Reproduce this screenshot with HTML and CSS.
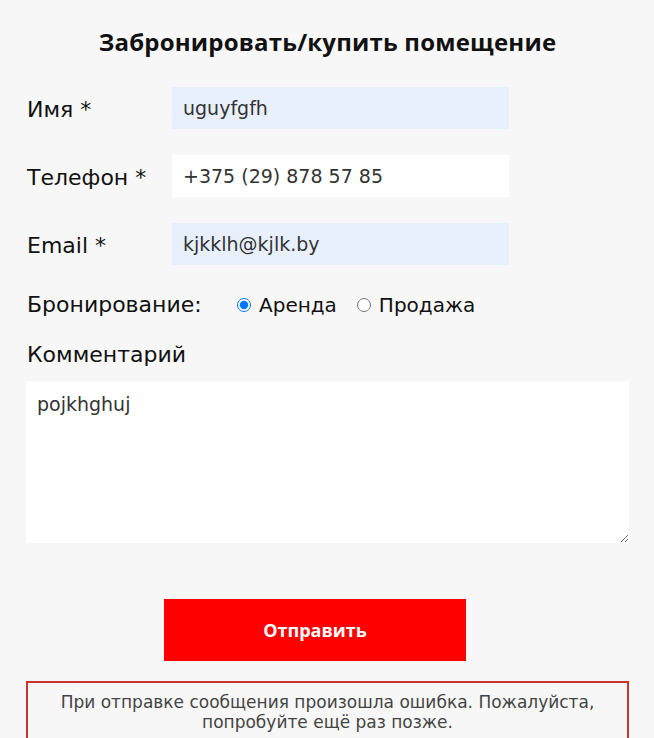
FILE: index.html
```html
<!DOCTYPE html>
<html lang="ru">
<head>
    <meta charset="UTF-8">
    <meta name="viewport" content="width=device-width, initial-scale=1.0">
    <title>Забронировать/купить помещение</title>
    <link rel="stylesheet" href="styles.css">
</head>
<body>
    <div class="form-wrap">
        <!-- Title -->
        <div class="form-title">Забронировать/купить помещение</div>

        <form class="booking-form" onsubmit="return false;">
            <div class="form-row">
                <label class="form-label" for="name">Имя *</label>
                <input class="form-input autofilled" type="text" id="name" value="uguyfgfh">
            </div>

            <div class="form-row">
                <label class="form-label" for="phone">Телефон *</label>
                <input class="form-input" type="text" id="phone" value="+375 (29) 878 57 85">
            </div>

            <div class="form-row">
                <label class="form-label" for="email">Email *</label>
                <input class="form-input autofilled" type="text" id="email" value="kjkklh@kjlk.by">
            </div>

            <!-- Booking type -->
            <div class="radio-row">
                <span class="form-label">Бронирование:</span>
                <label class="radio-option"><input type="radio" name="type" checked> Аренда</label>
                <label class="radio-option"><input type="radio" name="type"> Продажа</label>
            </div>

            <div class="comment-label">Комментарий</div>
            <textarea class="comment-input">pojkhghuj</textarea>

            <div class="submit-row">
                <button class="submit-btn" type="submit">Отправить</button>
            </div>

            <!-- Error message -->
            <div class="form-error">При отправке сообщения произошла ошибка. Пожалуйста, попробуйте ещё раз позже.</div>
        </form>
    </div>
</body>
</html>
```

FILE: styles.css
```css
/* General */
body {
    margin: 0;
    font-family: "DejaVu Sans", "Open Sans", sans-serif;
    background: #f7f7f7;
    color: #111;
}

.form-wrap {
    padding: 27px 25px 0 26px;
}

/* Title */
.form-title {
    text-align: center;
    font-family: "Open Sans", sans-serif;
    font-size: 24px;
    font-weight: bold;
    letter-spacing: 0.2px;
    line-height: 30px;
    margin-bottom: 30px;
}

/* Rows */
.form-row {
    display: flex;
    align-items: center;
    margin-bottom: 26px;
}

.form-label {
    width: 145px;
    padding-left: 1px;
    font-size: 22px;
    line-height: 28px;
}

.form-row .form-label {
    padding-top: 3px;
}

.form-input {
    width: 337px;
    height: 42px;
    box-sizing: border-box;
    padding: 0 11px;
    border: none;
    outline: none;
    background: #fff;
    font-family: inherit;
    font-size: 19px;
    color: #333;
}

.form-input.autofilled {
    background: #e8f0fe;
}

/* Radio */
.radio-row {
    display: flex;
    align-items: center;
    margin-bottom: 22px;
    font-size: 20px;
    line-height: 26px;
}

.radio-row .form-label {
    width: 210px;
}

.radio-option {
    display: flex;
    align-items: center;
    margin-right: 20px;
}

.radio-option input {
    margin: 0 8px 0 0;
    width: 14px;
    height: 14px;
}

/* Comment */
.comment-label {
    font-size: 22px;
    line-height: 28px;
    padding-left: 1px;
    margin-bottom: 12px;
}

.comment-input {
    display: block;
    width: 100%;
    height: 162px;
    box-sizing: border-box;
    padding: 12px 11px;
    border: none;
    outline: none;
    background: #fff;
    font-family: inherit;
    font-size: 19px;
    color: #333;
    resize: vertical;
}

/* Button */
.submit-row {
    display: flex;
    justify-content: center;
    margin-top: 56px;
    padding-right: 25px;
}

.submit-btn {
    width: 302px;
    height: 62px;
    background: #ff0000;
    color: #fff;
    border: none;
    font-family: "Open Sans", sans-serif;
    font-size: 18px;
    font-weight: bold;
    cursor: pointer;
}

/* Error */
.form-error {
    margin-top: 20px;
    border: 2px solid #cc3333;
    padding: 9px 20px 10px;
    text-align: center;
    font-size: 17px;
    line-height: 20px;
    color: #444;
}
```
